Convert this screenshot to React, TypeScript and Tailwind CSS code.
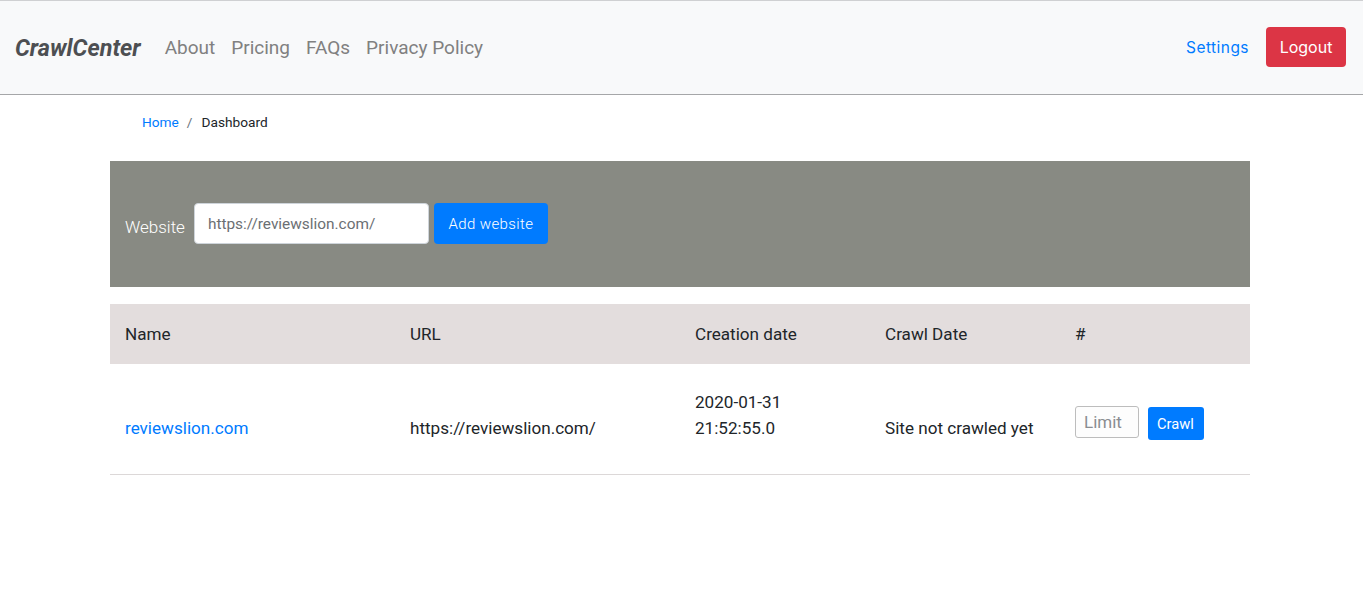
const roboto = "font-['Roboto',sans-serif]";

const App = () => {
  return (
    <div className={`min-h-[598px] bg-white ${roboto} text-[#212529]`}>
      <nav className="flex h-[95px] items-center justify-between border-t border-b border-t-[#cfd0d2] border-b-[#a5a6a8] bg-[#f8f9fa] pl-[15px] pr-[17px]">
        <div className="flex items-center pt-[2px]">
          <a className="mr-[24px] text-[23.4px] font-bold italic text-[#4d4f52]">CrawlCenter</a>
          <div className="flex gap-[16px] text-[19px] text-[#808080]">
            <a>About</a>
            <a>Pricing</a>
            <a>FAQs</a>
            <a>Privacy Policy</a>
          </div>
        </div>
        <div className="flex items-center gap-[17px]">
          <a className="font-['Inter',sans-serif] text-[15.5px] tracking-[0.45px] text-[#007bff]">Settings</a>
          <button className="mb-[2px] h-[40px] w-[80px] rounded-[4px] bg-[#dc3545] font-['Inter',sans-serif] text-[16px] text-white">
            Logout
          </button>
        </div>
      </nav>

      <div className="ml-[110px] w-[1140px]">
        <div className="flex h-[66px] items-start gap-[8px] pl-[32px] pt-[18px] text-[13.7px] leading-[18px]">
          <a className="text-[#007bff]">Home</a>
          <span className="text-[#6c757d]">/</span>
          <span className="ml-[1px]">Dashboard</span>
        </div>

        <div className="flex h-[126px] items-start bg-[#888a83] pl-[15px] pt-[42px]">
          <label className="mr-[9px] mt-[14px] text-[17px] font-light leading-[20px] text-white">Website</label>
          <input
            readOnly
            value="https://reviewslion.com/"
            className="mr-[5px] h-[41px] w-[235px] rounded-[4px] border border-[#ced4da] bg-white px-[13px] text-[15.4px] text-[#6b6f73] outline-none"
          />
          <button className="h-[41px] w-[114px] rounded-[4px] bg-[#007bff] pt-[1px] text-[15px] font-light tracking-[0.4px] text-white">
            Add website
          </button>
        </div>

        <table className="mt-[17px] w-[1140px] table-fixed border-collapse text-[17.1px]">
          <thead>
            <tr className="h-[60px] bg-[#e3dddd] text-left">
              <th className="w-[285px] pl-[15px] pt-[2px] font-normal">Name</th>
              <th className="w-[285px] pl-[15px] pt-[2px] font-normal">URL</th>
              <th className="w-[190px] pl-[15px] pt-[2px] font-normal">Creation date</th>
              <th className="w-[190px] pl-[15px] pt-[2px] font-normal">Crawl Date</th>
              <th className="w-[190px] pl-[15px] pt-[2px] font-normal">#</th>
            </tr>
          </thead>
          <tbody>
            <tr className="h-[110px] border-b border-[#dcd8d8]">
              <td className="pl-[15px] pt-[20px] align-middle text-[#007bff]">reviewslion.com</td>
              <td className="pl-[15px] pt-[20px] align-middle">https://reviewslion.com/</td>
              <td className="pl-[15px] pr-[15px] pb-[8px] align-middle leading-[26px]">
                2020-01-31
                <br />
                21:52:55.0
              </td>
              <td className="pl-[15px] pt-[20px] align-middle">Site not crawled yet</td>
              <td className="pl-[15px] pt-[8px] align-middle">
                <div className="flex items-start gap-[9px]">
                  <input
                    placeholder="Limit"
                    className="h-[32px] w-[64px] rounded-[3px] border border-[#bdbdbd] bg-[#fdfdfd] px-[8px] text-[17px] outline-none placeholder:text-[#8a8d91]"
                  />
                  <button className="mt-[1px] h-[33px] w-[56px] rounded-[3px] bg-[#007bff] pr-[1px] pt-[1px] text-[14.7px] text-white">
                    Crawl
                  </button>
                </div>
              </td>
            </tr>
          </tbody>
        </table>
      </div>
    </div>
  );
};

export default App;
